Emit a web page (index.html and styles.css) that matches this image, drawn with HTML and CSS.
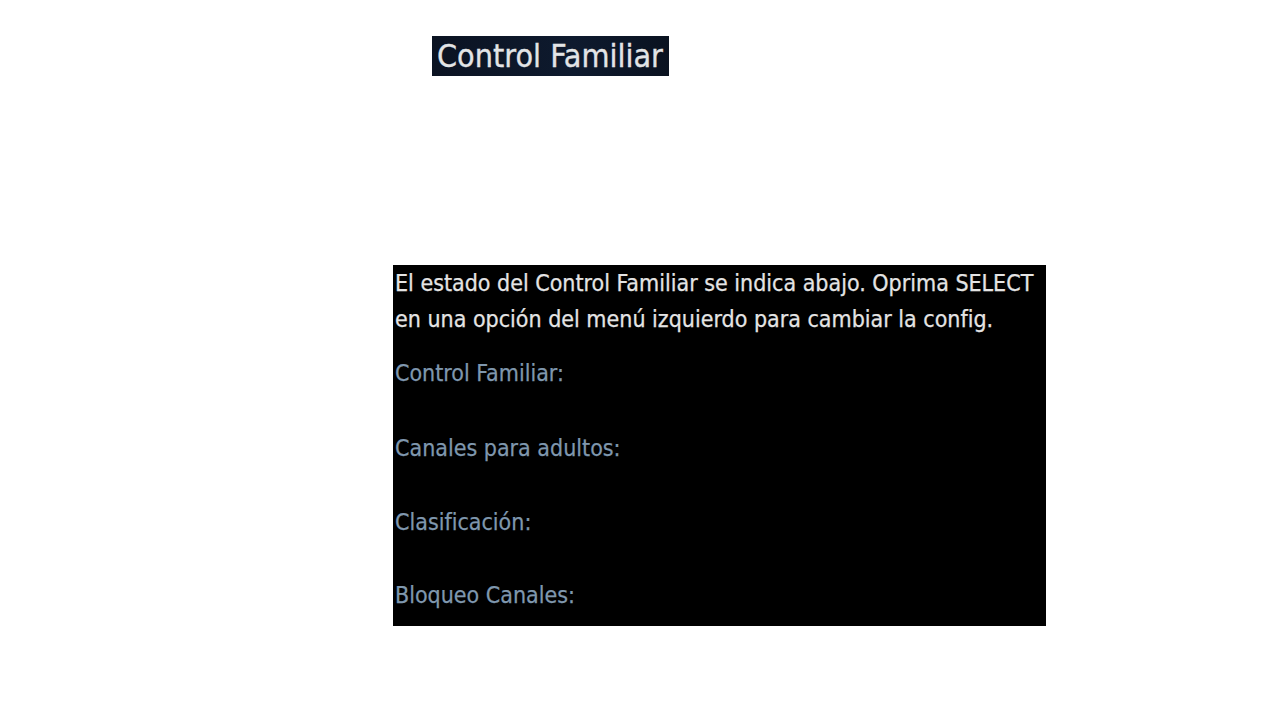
FILE: index.html
```html
<!DOCTYPE html>
<html lang="es">
<head>
<meta charset="utf-8">
<link rel="stylesheet" href="styles.css">
</head>
<body>
<div class="page">
  <div class="title-row"><h1 class="title">Control Familiar</h1></div>
  <div class="panel">
    <p class="intro">El estado del Control Familiar se indica abajo. Oprima SELECT en una opción del menú izquierdo para cambiar la config.</p>
    <ul class="labels">
      <li>Control Familiar:</li>
      <li>Canales para adultos:</li>
      <li>Clasificación:</li>
      <li>Bloqueo Canales:</li>
    </ul>
  </div>
</div>
</body>
</html>
```
FILE: styles.css
```css
* { box-sizing: border-box; }
html, body { margin: 0; padding: 0; background: #fff; }
body { width: 1280px; height: 720px; overflow: hidden; font-family: "DejaVu Sans Condensed", "DejaVu Sans", sans-serif; }
.page { padding-top: 36px; }
.title-row { display: flex; padding-left: 432px; }
.title {
  margin: 0;
  width: 237px;
  height: 40px;
  background: linear-gradient(90deg, #0b1322, #0e1a2e 60%, #0a1220);
  color: #e2e4e6;
  font-weight: normal;
  font-size: 32px;
  line-height: 40px;
  padding-left: 5px;
  white-space: nowrap;
  overflow: hidden;
  -webkit-text-stroke: 0.3px #e2e4e6;
}
.panel {
  margin: 189px 0 0 393px;
  width: 653px;
  height: 361px;
  background: #000;
  padding: 0 0 0 2px;
}
.intro {
  margin: 0;
  color: #e4e4e4;
  font-size: 23px;
  line-height: 36px;
  -webkit-text-stroke: 0.25px #e4e4e4;
}
.labels {
  list-style: none;
  margin: 0;
  padding: 0;
  color: #7f97ae;
  font-size: 23px;
  -webkit-text-stroke: 0.25px #7f97ae;
}
.labels li { height: 73.5px; line-height: 36px; padding-top: 2px; }
.labels li:first-child { margin-top: 18px; height: 73px; padding-top: 0; }
```
